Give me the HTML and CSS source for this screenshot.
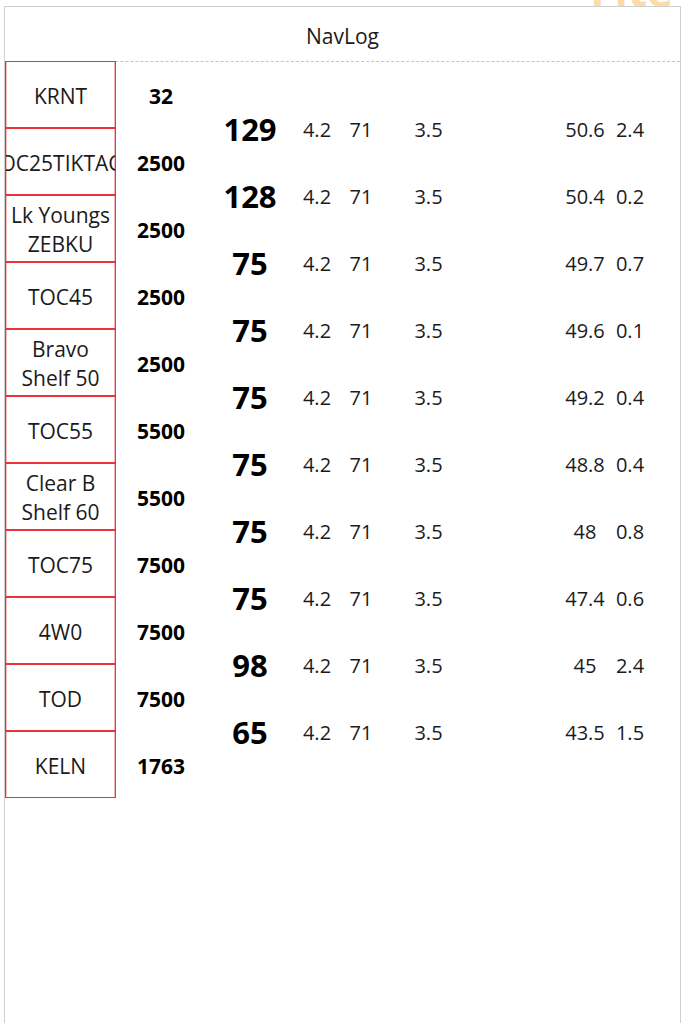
FILE: index.html
```html
<!DOCTYPE html>
<html lang="en">
<head>
  <meta charset="UTF-8" />
  <meta name="viewport" content="width=device-width, initial-scale=1.0" />
  <title>NavLog</title>
  <link rel="stylesheet" href="styles.css">
</head>
<body>
  <div class="mark">Flte</div>

  <div class="frame">
    <div class="header">NavLog</div>

    <div class="log">
      <div class="points">
        <div class="point"><div class="name"><span>KRNT</span></div><div class="alt">32</div></div>
        <div class="point"><div class="name"><span>TOC25TIKTACT</span></div><div class="alt">2500</div></div>
        <div class="point"><div class="name"><span>Lk Youngs ZEBKU</span></div><div class="alt">2500</div></div>
        <div class="point"><div class="name"><span>TOC45</span></div><div class="alt">2500</div></div>
        <div class="point"><div class="name"><span>Bravo Shelf 50</span></div><div class="alt">2500</div></div>
        <div class="point"><div class="name"><span>TOC55</span></div><div class="alt">5500</div></div>
        <div class="point"><div class="name"><span>Clear B Shelf 60</span></div><div class="alt">5500</div></div>
        <div class="point"><div class="name"><span>TOC75</span></div><div class="alt">7500</div></div>
        <div class="point"><div class="name"><span>4W0</span></div><div class="alt">7500</div></div>
        <div class="point"><div class="name"><span>TOD</span></div><div class="alt">7500</div></div>
        <div class="point"><div class="name"><span>KELN</span></div><div class="alt">1763</div></div>
      </div>

      <div class="legs">
        <div class="leg"><b>129</b><span>4.2</span><span>71</span><span>3.5</span><i></i><span>50.6</span><span>2.4</span></div>
        <div class="leg"><b>128</b><span>4.2</span><span>71</span><span>3.5</span><i></i><span>50.4</span><span>0.2</span></div>
        <div class="leg"><b>75</b><span>4.2</span><span>71</span><span>3.5</span><i></i><span>49.7</span><span>0.7</span></div>
        <div class="leg"><b>75</b><span>4.2</span><span>71</span><span>3.5</span><i></i><span>49.6</span><span>0.1</span></div>
        <div class="leg"><b>75</b><span>4.2</span><span>71</span><span>3.5</span><i></i><span>49.2</span><span>0.4</span></div>
        <div class="leg"><b>75</b><span>4.2</span><span>71</span><span>3.5</span><i></i><span>48.8</span><span>0.4</span></div>
        <div class="leg"><b>75</b><span>4.2</span><span>71</span><span>3.5</span><i></i><span>48</span><span>0.8</span></div>
        <div class="leg"><b>75</b><span>4.2</span><span>71</span><span>3.5</span><i></i><span>47.4</span><span>0.6</span></div>
        <div class="leg"><b>98</b><span>4.2</span><span>71</span><span>3.5</span><i></i><span>45</span><span>2.4</span></div>
        <div class="leg"><b>65</b><span>4.2</span><span>71</span><span>3.5</span><i></i><span>43.5</span><span>1.5</span></div>
      </div>
    </div>
  </div>
</body>
</html>
```

FILE: styles.css
```css
body {
  margin: 0;
  font-family: "Open Sans", "Noto Sans", sans-serif;
  color: #1b1b1b;
  background-color: #fff;
  overflow: hidden;
}
.mark {
  position: absolute;
  top: -40px;
  right: 8px;
  font-size: 44px;
  font-weight: bold;
  color: #fddcaa;
  z-index: -1;
}
.frame {
  position: relative;
  margin: 6px 0 0 4px;
  width: 675px;
  height: 1017px;
  border: 1px solid #cfcfcf;
  border-bottom: none;
  background-color: #fff;
}
.header {
  height: 50px;
  padding-top: 4px;
  display: flex;
  align-items: center;
  justify-content: center;
  font-size: 21px;
  border-bottom: 1px dashed #c4c4c4;
}
.log {
  display: flex;
}
.points {
  width: 201px;
}
.point {
  display: flex;
  align-items: center;
}
.point:first-child {
  margin-top: -1px;
}
.name {
  width: 109px;
  height: 62px;
  padding-top: 3px;
  border: 1px solid #e8333a;
  box-shadow: inset 1px 0 0 #f7b9b9, inset -1px 0 0 #f7b9b9;
  display: flex;
  align-items: center;
  justify-content: center;
  text-align: center;
  overflow: hidden;
  font-size: 21px;
  line-height: 29px;
}
.alt {
  width: 90px;
  padding-top: 2px;
  text-align: center;
  font-size: 21px;
  font-weight: bold;
  color: #000;
}
.legs {
  padding-top: 34px;
}
.leg {
  display: grid;
  grid-template-columns: 88px 46px 42px 93px 88px 44px 46px;
  align-items: center;
  height: 67px;
  font-size: 20px;
}
.leg span {
  text-align: center;
  white-space: nowrap;
}
.leg b {
  text-align: center;
  font-size: 31px;
  line-height: 38px;
  padding-bottom: 2px;
  color: #000;
}
```
